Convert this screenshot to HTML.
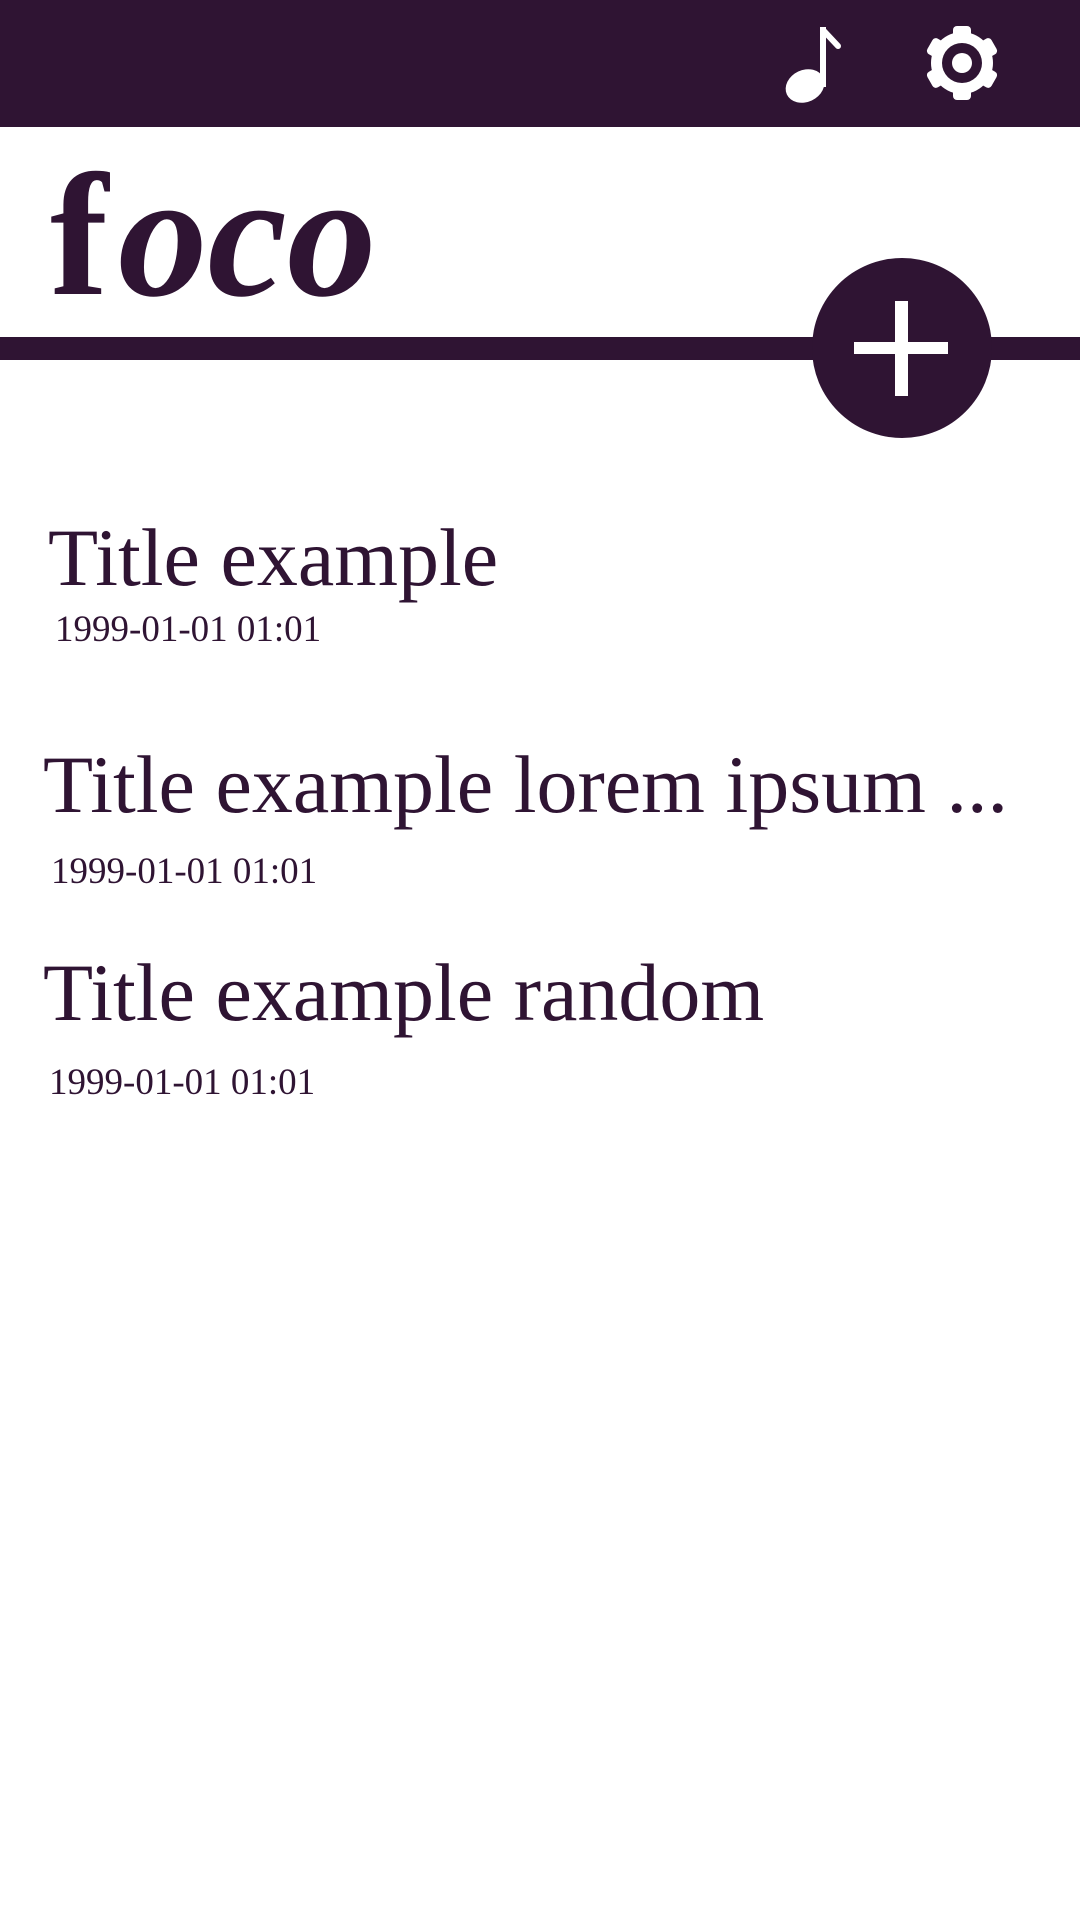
<!DOCTYPE html>
<html><head><meta charset="utf-8"><style>
html,body{margin:0;padding:0;background:#fff;}
body{width:1080px;height:1920px;position:relative;overflow:hidden;font-family:"Liberation Serif",serif;color:#2f1433;}
.bar{position:absolute;left:0;top:0;width:1080px;height:127px;background:#2f1433;}
.line{position:absolute;left:0;top:337px;width:1080px;height:23px;background:#2f1433;}
.fab{position:absolute;left:812px;top:258px;width:180px;height:180px;border-radius:50%;background:#2f1433;}
.t{position:absolute;white-space:nowrap;line-height:1;}
.title{font-size:82px;}
.date{font-size:37px;}
</style></head><body>
<div class="bar"></div>
<svg style="position:absolute;left:0;top:0" width="1080" height="127">
  <ellipse cx="805" cy="86" rx="20" ry="16" transform="rotate(-25 805 86)" fill="#fff"/>
  <rect x="820" y="27" width="6" height="60" fill="#fff"/>
  <path d="M823 30 L838 46" stroke="#fff" stroke-width="6" stroke-linecap="round"/>
  <g transform="translate(962 63)" fill="#fff">
    <circle r="31"/>
    <rect x="-9" y="-37" width="18" height="14" rx="4"/>
    <rect x="-9" y="-37" width="18" height="14" rx="4" transform="rotate(60)"/>
    <rect x="-9" y="-37" width="18" height="14" rx="4" transform="rotate(120)"/>
    <rect x="-9" y="-37" width="18" height="14" rx="4" transform="rotate(180)"/>
    <rect x="-9" y="-37" width="18" height="14" rx="4" transform="rotate(240)"/>
    <rect x="-9" y="-37" width="18" height="14" rx="4" transform="rotate(300)"/>
    <circle r="20" fill="#2f1433"/>
    <circle r="10"/>
  </g>
</svg>
<div class="t" style="left:50px;top:148px;font-size:175px;font-weight:bold;">f</div>
<div class="t" style="left:118px;top:145px;font-size:179px;font-style:italic;font-weight:bold;">oco</div>
<div class="line"></div>
<div class="fab"></div>
<div style="position:absolute;left:854px;top:342px;width:94px;height:12px;background:#fff"></div>
<div style="position:absolute;left:895px;top:301px;width:13px;height:95px;background:#fff"></div>

<div class="t title" style="left:48px;top:517px">Title example</div>
<div class="t date" style="left:55px;top:611px">1999-01-01 01:01</div>
<div class="t title" style="left:43px;top:744px">Title example lorem ipsum ...</div>
<div class="t date" style="left:51px;top:853px">1999-01-01 01:01</div>
<div class="t title" style="left:43px;top:952px">Title example random</div>
<div class="t date" style="left:49px;top:1064px">1999-01-01 01:01</div>
</body></html>
